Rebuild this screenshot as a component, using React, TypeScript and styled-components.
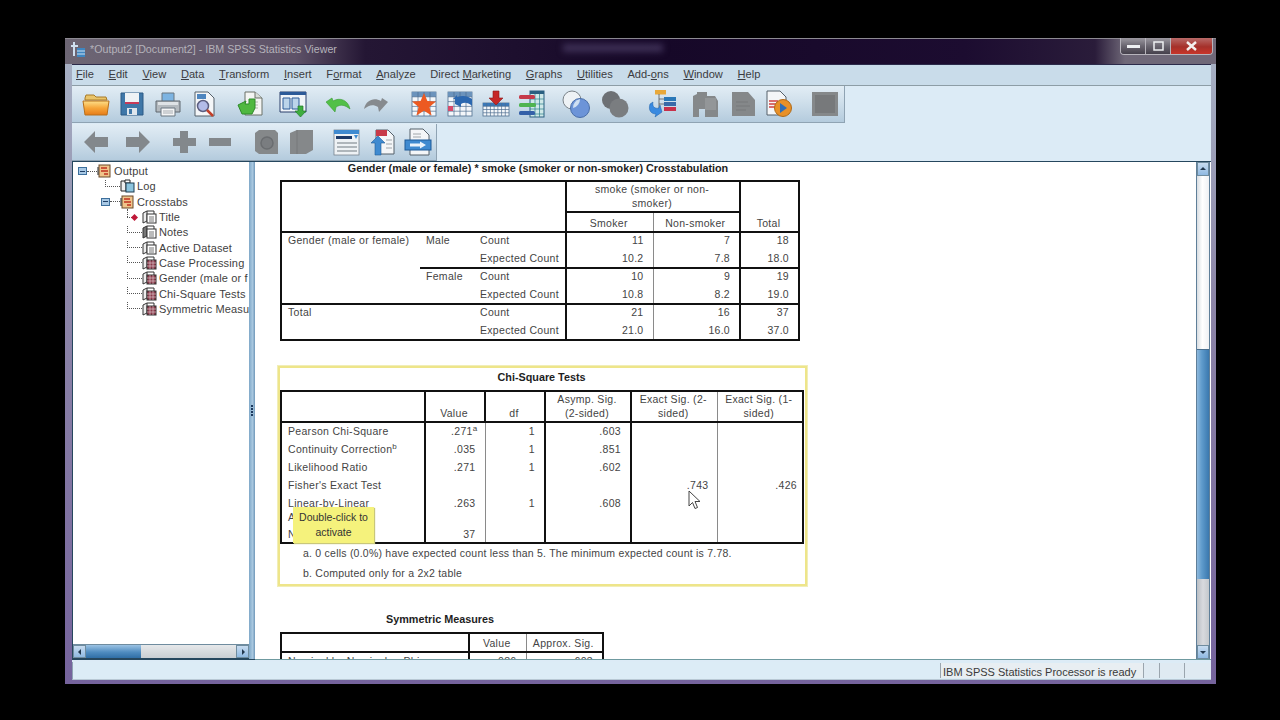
import React from "react";
import styled, { createGlobalStyle } from "styled-components";

const GlobalStyle = createGlobalStyle`
  html, body {
    margin: 0;
    padding: 0;
    background: #000;
  }
  * {
    box-sizing: border-box;
  }
`;

const Screen = styled.div`
  width: 1280px;
  height: 720px;
  overflow: hidden;
  padding: 38px 64px 36px 65px;
  background: #000;
  font-family: "Liberation Sans", Arial, sans-serif;
`;

const Window = styled.div`
  width: 1151px;
  height: 646px;
  display: flex;
  flex-direction: column;
  padding-bottom: 4px;
  background: linear-gradient(180deg, #a9b4c6 0%, #8d86a8 40%, #75639c 100%);
`;

const TitleBar = styled.div`
  height: 26px;
  flex: none;
  display: flex;
  align-items: flex-start;
  padding-left: 5px;
  border-top: 1px solid #8d8a92;
  background: linear-gradient(90deg, #6d6674 0, #5e5268 230px, #241634 300px, #160828 600px, #1c0c30 900px, #2a1c3a 1030px, #6f6878 1060px);
`;

const AppIcon = styled.svg`
  width: 16px;
  height: 17px;
  margin-top: 2px;
  flex: none;
`;

const TitleText = styled.div`
  margin: 3px 0 0 4px;
  color: #b4b2ba;
  font-size: 10.7px;
  line-height: 14px;
  white-space: nowrap;
`;

const GhostTitle = styled.div`
  width: 100px;
  height: 8px;
  margin: 5px 0 0 226px;
  background: #3d2f55;
  filter: blur(3px);
`;

const WindowButtons = styled.div`
  display: flex;
  height: 17px;
  margin: -1px 3px 0 auto;
  border: 1px solid #b7b4bc;
  border-top: none;
  border-radius: 0 0 4px 4px;
  overflow: hidden;
`;

const CaptionButton = styled.div<{ $w: number; $close?: boolean }>`
  width: ${(p) => p.$w}px;
  display: flex;
  align-items: center;
  justify-content: center;
  border-right: 1px solid #b7b4bc;
  background: ${(p) =>
    p.$close
      ? "linear-gradient(180deg, #b86a68 0%, #a5302a 55%, #c8352a 100%)"
      : "linear-gradient(180deg, #9b98a0 0%, #6a6670 50%, #45404c 100%)"};
  &:last-child {
    border-right: none;
  }
`;

const Body = styled.div`
  flex: 1;
  min-height: 0;
  display: flex;
  flex-direction: column;
  margin: 0 5px 0 7px;
  background: #dcebf6;
`;

const MenuBar = styled.div`
  height: 22px;
  flex: none;
  display: flex;
  align-items: center;
  gap: 14.7px;
  padding: 0 0 2px 4px;
  background: #c9dcea;
  border-top: 1px solid #2b2a4a;
  border-bottom: 1px solid #8d9da6;
  color: #3b3b40;
  font-size: 11.1px;
`;

const MenuItem = styled.span`
  white-space: nowrap;
`;

const ToolbarArea = styled.div`
  height: 76px;
  flex: none;
  display: flex;
  flex-direction: column;
  align-items: flex-start;
  gap: 1px;
  border-bottom: 1px solid #26475e;
`;

const Toolbar = styled.div<{ $w: number; $h: number }>`
  width: ${(p) => p.$w}px;
  height: ${(p) => p.$h}px;
  display: flex;
  align-items: center;
  background: linear-gradient(180deg, #e2edf5 0%, #cfdfeb 45%, #b4cbdd 100%);
  border-right: 1px solid #8fa3b3;
  border-bottom: 1px solid #8fa3b3;
`;

const ToolSlot = styled.div<{ $gap: number }>`
  width: 28px;
  height: 28px;
  flex: none;
  margin-left: ${(p) => p.$gap}px;
  svg {
    display: block;
    width: 28px;
    height: 28px;
  }
`;

const Main = styled.div`
  height: 498px;
  flex: none;
  display: flex;
`;

const TreePane = styled.div`
  width: 177px;
  flex: none;
  display: flex;
  flex-direction: column;
  background: #fff;
  border-left: 1px solid #26475e;
  border-bottom: 1px solid #26475e;
`;

const TreeList = styled.div`
  flex: 1;
  padding-top: 1.5px;
  overflow: hidden;
`;

const TreeRow = styled.div<{ $pad: number }>`
  position: relative;
  height: 15.3px;
  display: flex;
  align-items: center;
  padding-left: ${(p) => p.$pad}px;
  color: #3f3f3f;
  font-size: 11px;
  letter-spacing: 0.15px;
  white-space: nowrap;
  overflow: hidden;
`;

const Toggle = styled.span`
  width: 9px;
  height: 8px;
  flex: none;
  display: flex;
  align-items: center;
  justify-content: center;
  background: #a8c8e4;
  border: 1px solid #3d6f9c;
  &::after {
    content: "";
    width: 5px;
    height: 1px;
    background: #1f3f66;
  }
`;

const Branch = styled.span<{ $w: number; $x: number; $up: number }>`
  width: ${(p) => p.$w}px;
  flex: none;
  border-bottom: 1px dotted #555;
  &::before {
    content: "";
    position: absolute;
    left: ${(p) => p.$x}px;
    top: ${(p) => -p.$up}px;
    height: ${(p) => p.$up + 8}px;
    border-left: 1px dotted #555;
  }
`;

const Marker = styled.span`
  width: 5px;
  height: 5px;
  flex: none;
  margin-right: 5px;
  background: #c01838;
  transform: rotate(45deg);
`;

const TreeIconBox = styled.svg`
  width: 15px;
  height: 14px;
  flex: none;
  margin-right: 2px;
`;

const HScroll = styled.div`
  height: 15px;
  flex: none;
  display: flex;
  border-top: 1px solid #6f8c9f;
  border-bottom: 1px solid #26475e;
  background: linear-gradient(180deg, #e6e8ea 0%, #c9ced3 100%);
`;

const HThumb = styled.div`
  width: 55px;
  margin-left: 0;
  background: linear-gradient(180deg, #9cc3e4 0%, #4f8cc0 55%, #2f6ea6 100%);
`;

const ScrollButton = styled.div<{ $dir: "up" | "down" | "left" | "right" }>`
  flex: none;
  width: ${(p) => (p.$dir === "left" || p.$dir === "right" ? "13px" : "100%")};
  height: ${(p) => (p.$dir === "left" || p.$dir === "right" ? "100%" : "14px")};
  display: flex;
  align-items: center;
  justify-content: center;
  background: linear-gradient(180deg, #c8dcf0 0%, #8fb9e2 100%);
  border: 1px solid #6f8c9f;
  margin-left: ${(p) => (p.$dir === "right" ? "auto" : "0")};
  &::after {
    content: "";
    width: 0;
    height: 0;
    border: 3.5px solid transparent;
    ${(p) => (p.$dir === "up" ? "border-bottom-color: #22384e; margin-top: -4px;" : "")}
    ${(p) => (p.$dir === "down" ? "border-top-color: #22384e; margin-top: 4px;" : "")}
    ${(p) => (p.$dir === "left" ? "border-right-color: #22384e; margin-left: -4px;" : "")}
    ${(p) => (p.$dir === "right" ? "border-left-color: #22384e; margin-left: 4px;" : "")}
  }
`;

const Splitter = styled.div`
  width: 6px;
  flex: none;
  display: flex;
  align-items: center;
  justify-content: center;
  background: linear-gradient(90deg, #7fa8c8 0%, #a9c8e0 60%, #6f97b8 100%);
  border-bottom: 1px solid #26475e;
`;

const SplitDots = styled.div`
  width: 2px;
  height: 12px;
  margin-bottom: 0;
  background: repeating-linear-gradient(180deg, #1d3a5e 0 2px, transparent 2px 3px);
`;

const Viewer = styled.div`
  flex: 1;
  min-width: 0;
  display: flex;
  background: #fff;
  border-bottom: 1px solid #6f9aa0;
`;

const ViewerBody = styled.div`
  flex: 1;
  min-width: 0;
  height: 497px;
  overflow: hidden;
  padding-left: 23px;
`;

const Scrollbar = styled.div`
  width: 14px;
  flex: none;
  margin: 0 1px 0 0;
  display: flex;
  flex-direction: column;
  border-left: 1px solid #5f7f99;
  border-right: 1px solid #5f7f99;
  background: #fff;
`;

const ScrollTrack = styled.div`
  height: 173px;
  flex: none;
  background: linear-gradient(90deg, #d8dde2 0%, #fff 45%, #eef0f3 100%);
`;

const ScrollThumb = styled.div`
  height: 230px;
  flex: none;
  background: linear-gradient(90deg, #8db8dc 0%, #5f9bcc 40%, #3a78ae 100%);
  border-top: 1px solid #4a6f8f;
`;

const ScrollRest = styled.div`
  flex: 1;
  background: linear-gradient(90deg, #b9bec4 0%, #d8dade 50%, #c4c8cc 100%);
`;

const Title = styled.div<{ $w: number; $top: number; $shift?: number }>`
  width: ${(p) => p.$w}px;
  margin-top: ${(p) => p.$top}px;
  margin-left: ${(p) => p.$shift ?? 1}px;
  color: #1e1e1e;
  font-size: 10.8px;
  font-weight: bold;
  line-height: 12px;
  text-align: center;
  white-space: nowrap;
`;

const Table = styled.table<{ $w: number; $top: number; $left?: number }>`
  width: ${(p) => p.$w}px;
  margin-top: ${(p) => p.$top}px;
  margin-left: ${(p) => p.$left ?? 2}px;
  table-layout: fixed;
  border-collapse: collapse;
  border: 2px solid #111;
  color: #444;
  font-size: 10.5px;
  line-height: 14px;
  letter-spacing: 0.3px;
`;

type Line = "strong" | "soft" | "none";
const lineCss = (l?: Line) =>
  l === "strong" ? "2px solid #111" : l === "soft" ? "1px solid #8a8a8a" : "none";

const Cell = styled.td<{
  $num?: boolean;
  $head?: boolean;
  $right?: Line;
  $bottom?: Line;
  $h?: number;
  $pr?: number;
  $pt?: number;
}>`
  height: ${(p) => p.$h ?? 18}px;
  padding: ${(p) =>
    p.$head
      ? "0 5px 1px 3px"
      : `${p.$pt ?? 0}px ${p.$num ? p.$pr ?? 9 : 2}px 0 ${p.$num ? 2 : 6}px`};
  vertical-align: ${(p) => (p.$head ? "bottom" : "top")};
  text-align: ${(p) => (p.$head ? "center" : p.$num ? "right" : "left")};
  border-right: ${(p) => lineCss(p.$right)};
  border-bottom: ${(p) => lineCss(p.$bottom)};
  white-space: ${(p) => (p.$head ? "normal" : "nowrap")};
  overflow: visible;
`;

const Sup = styled.sup`
  font-size: 8px;
  line-height: 0;
  margin-right: -3px;
`;

const SelectedFrame = styled.div`
  position: relative;
  width: 529px;
  height: 220px;
  margin-top: 25px;
  outline: 1px solid #f1eeb8;
  border: 2px solid #eee58a;
`;

const FrameTitle = styled(Title)`
  margin-left: 1px;
`;

const Footnotes = styled.div`
  margin: -1px 0 0 23px;
  color: #444;
  font-size: 10.5px;
  line-height: 20px;
  letter-spacing: 0.23px;
  white-space: nowrap;
`;

const Tooltip = styled.div`
  position: absolute;
  left: 13px;
  top: 139px;
  width: 81px;
  height: 36px;
  padding-top: 3px;
  background: #f5f27c;
  box-shadow: 1px 1px 1px #c9c77a;
  color: #333;
  font-size: 10.5px;
  line-height: 15px;
  text-align: center;
`;

const Pointer = styled.svg`
  position: absolute;
  left: 408px;
  top: 122px;
  width: 13px;
  height: 20px;
`;

const StatusBar = styled.div`
  height: 18px;
  flex: none;
  margin-top: 2px;
  display: flex;
  align-items: stretch;
  padding-left: 1px;
  background: #dcecf6;
  border-bottom: 1px solid #b8c8d4;
  border-left: 1px solid #8fa3b3;
  color: #3a3a3a;
  font-size: 11px;
`;

const StatusCell = styled.div<{ $w: number; $first?: boolean }>`
  width: ${(p) => p.$w}px;
  flex: none;
  margin: 1px 0;
  margin-left: ${(p) => (p.$first ? "auto" : "0")};
  padding-left: 2px;
  line-height: 18px;
  border-left: 1px solid #9aa5ae;
  background: ${(p) => (p.$first ? "#e8eef2" : "#dfeaf2")};
  white-space: nowrap;
`;

/* ---------- drawn icons ---------- */

const Tool = ({ children }: { children: React.ReactNode }) => (
  <svg viewBox="0 0 28 28">{children}</svg>
);

const Doc = ({ x = 7, y = 2, w = 17, h = 23 }: { x?: number; y?: number; w?: number; h?: number }) => (
  <path
    d={`M${x} ${y}h${w - 6}l6 6v${h - 6}h-${w}z`}
    fill="#f4f6f8"
    stroke="#55606a"
    strokeWidth="1"
  />
);

const OpenIcon = () => (
  <Tool>
    <defs>
      <linearGradient id="fo" x1="0" y1="0" x2="0" y2="1">
        <stop offset="0" stopColor="#fde08a" />
        <stop offset="0.5" stopColor="#f6a63a" />
        <stop offset="1" stopColor="#e67b18" />
      </linearGradient>
    </defs>
    <path d="M3 8l1-3h8l2 2h10l1 3H3z" fill="#e9c46a" stroke="#a87a28" />
    <path d="M1 11h26l-2 14H3z" fill="url(#fo)" stroke="#b8701c" />
  </Tool>
);
const SaveIcon = () => (
  <Tool>
    <path d="M3 3h22v22H3z" fill="#3f77a8" stroke="#2c5a85" />
    <path d="M7 3h14v9H7z" fill="#eef2f5" />
    <path d="M7 12h14v2H7z" fill="#c83a58" />
    <path d="M9 18h10v7H9z" fill="#dfe6ec" />
    <path d="M11 19h3v5h-3z" fill="#3f77a8" />
  </Tool>
);
const PrintIcon = () => (
  <Tool>
    <path d="M8 3h12v9H8z" fill="#7db4e2" stroke="#6a7680" />
    <path d="M2 11h24v11H2z" fill="#b4babf" stroke="#5f676e" />
    <path d="M4 12h20v3H4z" fill="#dfe3e6" />
    <path d="M7 18h14v8H7z" fill="#f4f5f6" stroke="#6a7680" />
    <path d="M9 21h10M9 23h10" stroke="#a8adb2" />
  </Tool>
);
const PreviewIcon = () => (
  <Tool>
    <Doc x={5} y={2} w={19} h={24} />
    <path d="M7 4h9v5H7z" fill="#4f86bf" />
    <circle cx="13" cy="16" r="5.5" fill="#b3bce8" stroke="#5c5f80" strokeWidth="1.5" />
    <path d="M17 20l6 6" stroke="#c2402a" strokeWidth="2.5" />
  </Tool>
);
const ExportIcon = () => (
  <Tool>
    <path d="M9 2h10l7 6v17H9z" fill="#f4f5f3" stroke="#6a7068" />
    <path d="M19 2v6h7" fill="#d8dcd8" stroke="#6a7068" />
    <path d="M18 12h4M18 15h4M18 18h4" stroke="#b0b4ae" />
    <path d="M2 15l4 9h10l3-6v-9h-6v5H9l1-3z" fill="#4fb840" stroke="#2e8a2a" />
  </Tool>
);
const SelectIcon = () => (
  <Tool>
    <path d="M1 2h26v20H1z" fill="#f0f4f8" stroke="#2a3f6a" />
    <path d="M1 2h26v3H1z" fill="#2c5a98" />
    <path d="M4 8h7v11H4zM13 8h7v11h-7z" fill="#bcd4ea" stroke="#2c5a98" />
    <path d="M19 16h5v5h3l-5.5 6-5.5-6h3z" fill="#3fae3f" stroke="#1f7a2a" strokeWidth="0.7" />
  </Tool>
);
const UndoIcon = () => (
  <Tool>
    <path d="M2 12l9 10 1-5c5-3 9-2 14 2-2-9-10-12-17-8l-1-3z" fill="#52c048" stroke="#3a9a34" strokeWidth="0.6" />
  </Tool>
);
const RedoIcon = () => (
  <Tool>
    <path d="M26 12l-9 10-1-5c-5-3-9-2-14 2 2-9 10-12 17-8l1-3z" fill="#868a8e" />
  </Tool>
);
const Grid = ({ x, y, w, h, nx, ny, head = "#6b93bc" }: { x: number; y: number; w: number; h: number; nx: number; ny: number; head?: string }) => {
  const lines: string[] = [];
  for (let i = 1; i < nx; i++) lines.push(`M${x + (i * w) / nx} ${y}v${h}`);
  for (let j = 1; j < ny; j++) lines.push(`M${x} ${y + (j * h) / ny}h${w}`);
  return (
    <g>
      <rect x={x} y={y} width={w} height={h} fill="#f4f7fa" stroke="#4f6f90" strokeWidth="0.8" />
      <rect x={x} y={y} width={w} height={h / ny} fill={head} />
      <path d={lines.join("")} stroke="#4f6f90" strokeWidth="0.7" fill="none" />
    </g>
  );
};
const StarIcon = () => (
  <Tool>
    <Grid x={2} y={2} w={24} h={24} nx={4} ny={5} />
    <path d="M14 3l3.4 8 8.6.6-6.6 5.4 2.2 8.4L14 20.8l-7.6 4.6 2.2-8.4L2 11.6l8.6-.6z" fill="#ec5a22" />
  </Tool>
);
const SwapIcon = () => (
  <Tool>
    <Grid x={2} y={2} w={24} h={24} nx={4} ny={5} />
    <path d="M2 16h5v5H2z" fill="#d64a6a" />
    <path d="M9 14V9l-2 0 4-4 0 2c6-2 11-1 15 2v7c-4-4-8-4-11-2v3z" fill="#2c68b0" />
  </Tool>
);
const DownTableIcon = () => (
  <Tool>
    <Grid x={1} y={13} w={26} h={13} nx={7} ny={4} head="#3a78b8" />
    <path d="M11 1h6v7h4l-7 7-7-7h4z" fill="#c62828" stroke="#8a1a1a" strokeWidth="0.6" />
  </Tool>
);
const BarsTableIcon = () => (
  <Tool>
    <rect x="12" y="1" width="14" height="26" fill="#cfe8e8" stroke="#2a5f80" />
    <path d="M12 1h14v3H12z" fill="#2a5f80" />
    <path d="M17 4v23M21.5 4v23M12 9h14M12 14h14M12 19h14M12 24h14" stroke="#2a7f8a" strokeWidth="0.7" />
    <rect x="1" y="5" width="16" height="4" rx="1.5" fill="#c63a4a" />
    <rect x="1" y="13" width="17" height="4" rx="1.5" fill="#4fb44f" />
    <rect x="1" y="21" width="16" height="4" rx="1.5" fill="#3460a8" />
  </Tool>
);
const VennIcon = () => (
  <Tool>
    <circle cx="10" cy="10" r="9" fill="#eef2f5" stroke="#7a8288" />
    <circle cx="18" cy="18" r="9.5" fill="#6c94d8" stroke="#4a6fa8" />
    <path d="M11 18a9.5 9.5 0 0 1 7-9 9 9 0 0 1-7 9z" fill="#cfe0f2" />
  </Tool>
);
const VennGreyIcon = () => (
  <Tool>
    <circle cx="10" cy="10" r="9" fill="#6d7074" />
    <circle cx="18" cy="18" r="9.5" fill="#7a7d80" />
  </Tool>
);
const TreeBoxesIcon = () => (
  <Tool>
    <rect x="7" y="0" width="11" height="4.5" fill="#e8a83a" />
    <path d="M11 4v15M11 9h6M11 14h6" stroke="#555" strokeWidth="0.8" />
    <rect x="16" y="7" width="12" height="4" fill="#2a78b8" />
    <rect x="16" y="12" width="12" height="4" fill="#3a6aa8" />
    <rect x="16" y="17" width="12" height="4" fill="#c8304a" />
    <path d="M2 14c-2 6 1 10 6 10l-1 3 7-5-2-7-1 3c-4 1-7-1-6-6z" fill="#3a8ae0" stroke="#1f60a8" strokeWidth="0.5" />
  </Tool>
);
const BookGreyIcon = () => (
  <Tool>
    <path d="M2 6l4-2v-2h10v4h8l3 5v16H14v-8h-6v8H2z" fill="#85888a" />
    <path d="M14 8h11v12H14z" fill="#939698" />
  </Tool>
);
const DocGreyIcon = () => (
  <Tool>
    <path d="M3 2h16l7 8v16H3z" fill="#85888a" />
    <path d="M7 12h12M7 16h14M7 20h10" stroke="#77797b" />
  </Tool>
);
const PlayDocIcon = () => (
  <Tool>
    <Doc x={2} y={1} w={19} h={24} />
    <path d="M4 11h9M4 14h7M4 17h9" stroke="#d04040" strokeWidth="1.5" />
    <circle cx="18" cy="18" r="8.5" fill="#e89028" stroke="#b06a18" />
    <path d="M15 13l7 5-7 5z" fill="#2f6eb8" />
  </Tool>
);
const SquareGreyIcon = () => (
  <Tool>
    <rect x="1" y="2" width="26" height="24" fill="#85888a" />
    <rect x="4" y="5" width="20" height="18" fill="#77797b" />
  </Tool>
);
const BackIcon = () => (
  <Tool>
    <path d="M1 14l11-11v6h13v10H12v6z" fill="#83888c" />
  </Tool>
);
const ForwardIcon = () => (
  <Tool>
    <path d="M27 14L16 3v6H3v10h13v6z" fill="#83888c" />
  </Tool>
);
const PlusIcon = () => (
  <Tool>
    <path d="M10 3h8v7h8v8h-8v7h-8v-7H3v-8h7z" fill="#83888c" />
  </Tool>
);
const MinusIcon = () => (
  <Tool>
    <path d="M3 10h22v8H3z" fill="#83888c" />
  </Tool>
);
const BookAIcon = () => (
  <Tool>
    <path d="M3 5l4-3h16l3 3v21H7l-4-3z" fill="#85888a" />
    <circle cx="15" cy="15" r="6" fill="#7a7d80" stroke="#6a6d70" strokeWidth="1.5" />
  </Tool>
);
const BookBIcon = () => (
  <Tool>
    <path d="M2 5l7-3h16v20l-7 4H2z" fill="#85888a" />
    <path d="M9 2v24" stroke="#77797b" />
  </Tool>
);
const ListIcon = () => (
  <Tool>
    <rect x="2" y="2" width="25" height="25" fill="#eef2f5" stroke="#6a7680" strokeWidth="0.7" />
    <rect x="2" y="2" width="25" height="4" fill="#3f8ad0" />
    <rect x="4" y="8" width="16" height="3" fill="#1c3a6a" />
    <path d="M22 7l4 0-2 4z" fill="#3f8ad0" />
    <path d="M5 15h20M5 19h20M5 23h20" stroke="#9aa2a8" strokeWidth="1.4" />
  </Tool>
);
const DocUpIcon = () => (
  <Tool>
    <Doc x={8} y={2} w={18} h={24} />
    <path d="M8 2h11v6H8z" fill="#c83a48" />
    <path d="M18 12h6M18 16h6M18 20h6" stroke="#a0a6aa" />
    <path d="M10 8l7 7h-4v12H7V15H3z" fill="#3f8ad0" stroke="#1f5a98" strokeWidth="0.6" />
  </Tool>
);
const DocArrowIcon = () => (
  <Tool>
    <Doc x={6} y={1} w={19} h={26} />
    <path d="M9 6h8M9 9h8" stroke="#a0a6aa" />
    <rect x="1" y="12" width="26" height="10" fill="#3f8ad0" stroke="#1f5a98" />
    <path d="M6 15.5h10v-2l6 3.5-6 3.5v-2H6z" fill="#eaf3fb" />
  </Tool>
);

const toolbarOne: { icon: React.ReactNode; gap: number }[] = [
  { icon: <OpenIcon />, gap: 10 },
  { icon: <SaveIcon />, gap: 8 },
  { icon: <PrintIcon />, gap: 8 },
  { icon: <PreviewIcon />, gap: 8 },
  { icon: <ExportIcon />, gap: 18 },
  { icon: <SelectIcon />, gap: 15 },
  { icon: <UndoIcon />, gap: 17 },
  { icon: <RedoIcon />, gap: 10 },
  { icon: <StarIcon />, gap: 20 },
  { icon: <SwapIcon />, gap: 8 },
  { icon: <DownTableIcon />, gap: 8 },
  { icon: <BarsTableIcon />, gap: 8 },
  { icon: <VennIcon />, gap: 16 },
  { icon: <VennGreyIcon />, gap: 11 },
  { icon: <TreeBoxesIcon />, gap: 19 },
  { icon: <BookGreyIcon />, gap: 15 },
  { icon: <DocGreyIcon />, gap: 10 },
  { icon: <PlayDocIcon />, gap: 8 },
  { icon: <SquareGreyIcon />, gap: 18 },
];

const toolbarTwo: { icon: React.ReactNode; gap: number }[] = [
  { icon: <BackIcon />, gap: 11 },
  { icon: <ForwardIcon />, gap: 12 },
  { icon: <PlusIcon />, gap: 19 },
  { icon: <MinusIcon />, gap: 8 },
  { icon: <BookAIcon />, gap: 18 },
  { icon: <BookBIcon />, gap: 8 },
  { icon: <ListIcon />, gap: 16 },
  { icon: <DocUpIcon />, gap: 8 },
  { icon: <DocArrowIcon />, gap: 8 },
];

type TreeKind = "output" | "log" | "title" | "notes" | "doc" | "table";

const TreeIcon = ({ kind }: { kind: TreeKind }) => (
  <TreeIconBox viewBox="0 0 15 14">
    {kind === "output" && (
      <>
        <rect x="2" y="1" width="11" height="12" fill="#f0c48a" stroke="#6a4a2a" />
        <path d="M4 4h6M4 7h7M7 10h4" stroke="#c03020" strokeWidth="1.4" />
        <path d="M1 3v8" stroke="#222" />
      </>
    )}
    {kind === "log" && (
      <>
        <path d="M1 2h5v10H1z" fill="#eee" stroke="#222" />
        <path d="M5 1h5v3H5z" fill="#fff" stroke="#222" />
        <rect x="6" y="4" width="8" height="9" fill="#8cc4de" stroke="#1e3c50" />
      </>
    )}
    {kind !== "output" && kind !== "log" && (
      <>
        <path d="M1 3l4-2v10l-4 2z" fill={kind === "notes" ? "#777" : "#eee"} stroke="#333" />
        <path d="M5 1h7v3" fill="none" stroke="#333" />
        <rect x="5" y="4" width="9" height="9" fill={kind === "table" ? "#8a3a4a" : "#fff"} stroke="#333" />
        {kind === "table" ? (
          <path d="M5 7h9M5 10h9M8 4v9M11 4v9" stroke="#e8d8da" strokeWidth="0.6" />
        ) : (
          <path d="M7 7h5M7 9h5M7 11h5" stroke="#777" />
        )}
      </>
    )}
  </TreeIconBox>
);

const menus: [string, string, string][] = [
  ["", "F", "ile"],
  ["", "E", "dit"],
  ["", "V", "iew"],
  ["", "D", "ata"],
  ["", "T", "ransform"],
  ["", "I", "nsert"],
  ["F", "o", "rmat"],
  ["", "A", "nalyze"],
  ["Direct ", "M", "arketing"],
  ["", "G", "raphs"],
  ["", "U", "tilities"],
  ["Add-", "o", "ns"],
  ["", "W", "indow"],
  ["", "H", "elp"],
];

const leaves: { label: string; kind: TreeKind; up: number; mark?: boolean }[] = [
  { label: "Title", kind: "title", up: 0, mark: true },
  { label: "Notes", kind: "notes", up: 8 },
  { label: "Active Dataset", kind: "doc", up: 8 },
  { label: "Case Processing", kind: "table", up: 8 },
  { label: "Gender (male or f", kind: "table", up: 8 },
  { label: "Chi-Square Tests", kind: "table", up: 8 },
  { label: "Symmetric Measu", kind: "table", up: 8 },
];

export default function App() {
  return (
    <>
      <GlobalStyle />
      <Screen>
        <Window>
          <TitleBar>
            <AppIcon viewBox="0 0 16 17">
              <path d="M4 1v14M1 5h7" stroke="#cfe0f0" strokeWidth="2" />
              <rect x="7" y="7" width="8" height="9" fill="#3f86c0" />
              <path d="M7 10h8M7 13h8" stroke="#cfe0f0" />
            </AppIcon>
            <TitleText>*Output2 [Document2] - IBM SPSS Statistics Viewer</TitleText>
            <GhostTitle />
            <WindowButtons>
              <CaptionButton $w={25}>
                <svg width="13" height="5" viewBox="0 0 13 5">
                  <rect x="0" y="1" width="13" height="3" fill="#eef0f2" />
                </svg>
              </CaptionButton>
              <CaptionButton $w={25}>
                <svg width="11" height="10" viewBox="0 0 11 10">
                  <rect x="1" y="1" width="9" height="8" fill="none" stroke="#eef0f2" strokeWidth="1.5" />
                </svg>
              </CaptionButton>
              <CaptionButton $w={41} $close>
                <svg width="11" height="10" viewBox="0 0 11 10">
                  <path d="M1 1l9 8M10 1l-9 8" stroke="#f4f0ee" strokeWidth="2.4" />
                </svg>
              </CaptionButton>
            </WindowButtons>
          </TitleBar>
          <Body>
            <MenuBar>
              {menus.map(([before, key, after]) => (
                <MenuItem key={before + key + after}>
                  {before}
                  <u>{key}</u>
                  {after}
                </MenuItem>
              ))}
            </MenuBar>
            <ToolbarArea>
              <Toolbar $w={773} $h={37}>
                {toolbarOne.map((t, i) => (
                  <ToolSlot key={i} $gap={t.gap}>
                    {t.icon}
                  </ToolSlot>
                ))}
              </Toolbar>
              <Toolbar $w={365} $h={37}>
                {toolbarTwo.map((t, i) => (
                  <ToolSlot key={i} $gap={t.gap}>
                    {t.icon}
                  </ToolSlot>
                ))}
              </Toolbar>
            </ToolbarArea>
            <Main>
              <TreePane>
                <TreeList>
                  <TreeRow $pad={5}>
                    <Toggle />
                    <Branch $w={10} $x={32} $up={-8} />
                    <TreeIcon kind="output" />
                    Output
                  </TreeRow>
                  <TreeRow $pad={32}>
                    <Branch $w={15} $x={32} $up={8} />
                    <TreeIcon kind="log" />
                    Log
                  </TreeRow>
                  <TreeRow $pad={28}>
                    <Toggle />
                    <Branch $w={10} $x={54} $up={-8} />
                    <TreeIcon kind="output" />
                    Crosstabs
                  </TreeRow>
                  {leaves.map((leaf) => (
                    <TreeRow key={leaf.label} $pad={54}>
                      <Branch $w={leaf.mark ? 5 : 15} $x={54} $up={leaf.up} />
                      {leaf.mark && <Marker />}
                      <TreeIcon kind={leaf.kind} />
                      {leaf.label}
                    </TreeRow>
                  ))}
                </TreeList>
                <HScroll>
                  <ScrollButton $dir="left" />
                  <HThumb />
                  <ScrollButton $dir="right" />
                </HScroll>
              </TreePane>
              <Splitter>
                <SplitDots />
              </Splitter>
              <Viewer>
                <ViewerBody>
                  <Title $w={518} $top={0}>
                    Gender (male or female) * smoke (smoker or non-smoker) Crosstabulation
                  </Title>
                  <Table $w={518} $top={6}>
                    <colgroup>
                      <col style={{ width: 139 }} />
                      <col style={{ width: 54 }} />
                      <col style={{ width: 92 }} />
                      <col style={{ width: 87 }} />
                      <col style={{ width: 87 }} />
                      <col style={{ width: 59 }} />
                    </colgroup>
                    <tbody>
                      <tr>
                        <Cell $head colSpan={3} rowSpan={2} $right="strong" $bottom="strong" />
                        <Cell $head colSpan={2} $right="strong" $bottom="strong" $h={31}>
                          smoke (smoker or non-
                          <br />
                          smoker)
                        </Cell>
                        <Cell $head rowSpan={2} $bottom="strong">
                          Total
                        </Cell>
                      </tr>
                      <tr>
                        <Cell $head $right="soft" $bottom="strong" $h={20}>
                          Smoker
                        </Cell>
                        <Cell $head $right="strong" $bottom="strong" $h={20}>
                          Non-smoker
                        </Cell>
                      </tr>
                      <tr>
                        <Cell rowSpan={4} $bottom="strong">
                          Gender (male or female)
                        </Cell>
                        <Cell rowSpan={2} $bottom="strong">
                          Male
                        </Cell>
                        <Cell $right="strong">Count</Cell>
                        <Cell $num $right="soft">11</Cell>
                        <Cell $num $right="strong">7</Cell>
                        <Cell $num>18</Cell>
                      </tr>
                      <tr>
                        <Cell $pt={1} $right="strong" $bottom="strong">Expected Count</Cell>
                        <Cell $pt={1} $num $right="soft" $bottom="strong">10.2</Cell>
                        <Cell $pt={1} $num $right="strong" $bottom="strong">7.8</Cell>
                        <Cell $pt={1} $num $bottom="strong">18.0</Cell>
                      </tr>
                      <tr>
                        <Cell rowSpan={2} $bottom="strong">
                          Female
                        </Cell>
                        <Cell $right="strong">Count</Cell>
                        <Cell $num $right="soft">10</Cell>
                        <Cell $num $right="strong">9</Cell>
                        <Cell $num>19</Cell>
                      </tr>
                      <tr>
                        <Cell $pt={1} $right="strong" $bottom="strong">Expected Count</Cell>
                        <Cell $pt={1} $num $right="soft" $bottom="strong">10.8</Cell>
                        <Cell $pt={1} $num $right="strong" $bottom="strong">8.2</Cell>
                        <Cell $pt={1} $num $bottom="strong">19.0</Cell>
                      </tr>
                      <tr>
                        <Cell colSpan={2} rowSpan={2}>
                          Total
                        </Cell>
                        <Cell $right="strong">Count</Cell>
                        <Cell $num $right="soft">21</Cell>
                        <Cell $num $right="strong">16</Cell>
                        <Cell $num>37</Cell>
                      </tr>
                      <tr>
                        <Cell $pt={1} $right="strong">Expected Count</Cell>
                        <Cell $pt={1} $num $right="soft">21.0</Cell>
                        <Cell $pt={1} $num $right="strong">16.0</Cell>
                        <Cell $pt={1} $num>37.0</Cell>
                      </tr>
                    </tbody>
                  </Table>

                  <SelectedFrame>
                    <FrameTitle $w={521} $top={3}>
                      Chi-Square Tests
                    </FrameTitle>
                    <Table $w={522} $top={7} $left={0}>
                      <colgroup>
                        <col style={{ width: 144 }} />
                        <col style={{ width: 60 }} />
                        <col style={{ width: 60 }} />
                        <col style={{ width: 86 }} />
                        <col style={{ width: 86 }} />
                        <col style={{ width: 86 }} />
                      </colgroup>
                      <tbody>
                        <tr>
                          <Cell $head $right="strong" $bottom="strong" $h={31} />
                          <Cell $head $right="strong" $bottom="strong">Value</Cell>
                          <Cell $head $right="strong" $bottom="strong">df</Cell>
                          <Cell $head $right="strong" $bottom="strong">Asymp. Sig. (2-sided)</Cell>
                          <Cell $head $right="soft" $bottom="strong">Exact Sig. (2-sided)</Cell>
                          <Cell $head $bottom="strong">Exact Sig. (1-sided)</Cell>
                        </tr>
                        <tr>
                          <Cell $pt={1} $right="strong">Pearson Chi-Square</Cell>
                          <Cell $pt={1} $num $right="soft" $pr={10}>.271<Sup>a</Sup></Cell>
                          <Cell $pt={1} $num $right="strong">1</Cell>
                          <Cell $pt={1} $num $right="strong">.603</Cell>
                          <Cell $pt={1} $num $right="soft" />
                          <Cell $pt={1} $num />
                        </tr>
                        <tr>
                          <Cell $pt={2} $right="strong">Continuity Correction<Sup>b</Sup></Cell>
                          <Cell $pt={2} $num $right="soft">.035</Cell>
                          <Cell $pt={2} $num $right="strong">1</Cell>
                          <Cell $pt={2} $num $right="strong">.851</Cell>
                          <Cell $pt={2} $num $right="soft" />
                          <Cell $pt={2} $num />
                        </tr>
                        <tr>
                          <Cell $pt={2} $right="strong">Likelihood Ratio</Cell>
                          <Cell $pt={2} $num $right="soft">.271</Cell>
                          <Cell $pt={2} $num $right="strong">1</Cell>
                          <Cell $pt={2} $num $right="strong">.602</Cell>
                          <Cell $pt={2} $num $right="soft" />
                          <Cell $pt={2} $num />
                        </tr>
                        <tr>
                          <Cell $pt={2} $right="strong">Fisher's Exact Test</Cell>
                          <Cell $pt={2} $num $right="soft" />
                          <Cell $pt={2} $num $right="strong" />
                          <Cell $pt={2} $num $right="strong" />
                          <Cell $pt={2} $num $right="soft" $pr={8}>.743</Cell>
                          <Cell $pt={2} $num $pr={5}>.426</Cell>
                        </tr>
                        <tr>
                          <Cell $pt={2} $right="strong" $h={31}>
                            Linear-by-Linear
                            <br />
                            Association
                          </Cell>
                          <Cell $pt={2} $num $right="soft">.263</Cell>
                          <Cell $pt={2} $num $right="strong">1</Cell>
                          <Cell $pt={2} $num $right="strong">.608</Cell>
                          <Cell $pt={2} $num $right="soft" />
                          <Cell $pt={2} $num />
                        </tr>
                        <tr>
                          <Cell $pt={2} $right="strong" $h={18}>N of Valid Cases</Cell>
                          <Cell $pt={2} $num $right="soft" $h={18}>37</Cell>
                          <Cell $pt={2} $num $right="strong" $h={18} />
                          <Cell $pt={2} $num $right="strong" $h={18} />
                          <Cell $pt={2} $num $right="soft" $h={18} />
                          <Cell $pt={2} $num $h={18} />
                        </tr>
                      </tbody>
                    </Table>
                    <Footnotes>
                      a. 0 cells (0.0%) have expected count less than 5. The minimum expected count is 7.78.
                      <br />
                      b. Computed only for a 2x2 table
                    </Footnotes>
                    <Tooltip>
                      Double-click to
                      <br />
                      activate
                    </Tooltip>
                    <Pointer viewBox="0 0 13 20">
                      <path d="M1 1v15l3.5-3.5 2.5 6 2.5-1-2.5-6H12z" fill="#fff" stroke="#444" strokeWidth="1" />
                    </Pointer>
                  </SelectedFrame>

                  <Title $w={322} $top={27}>
                    Symmetric Measures
                  </Title>
                  <Table $w={322} $top={7}>
                    <colgroup>
                      <col style={{ width: 188 }} />
                      <col style={{ width: 57 }} />
                      <col style={{ width: 77 }} />
                    </colgroup>
                    <tbody>
                      <tr>
                        <Cell $head $right="strong" $bottom="strong" $h={19} />
                        <Cell $head $right="soft" $bottom="strong">Value</Cell>
                        <Cell $head $bottom="strong">Approx. Sig.</Cell>
                      </tr>
                      <tr>
                        <Cell $pt={1} $right="strong">Nominal by Nominal&nbsp;&nbsp;&nbsp;&nbsp;&nbsp;Phi</Cell>
                        <Cell $pt={1} $num $right="soft">.086</Cell>
                        <Cell $pt={1} $num>.603</Cell>
                      </tr>
                    </tbody>
                  </Table>
                </ViewerBody>
                <Scrollbar>
                  <ScrollButton $dir="up" />
                  <ScrollTrack />
                  <ScrollThumb />
                  <ScrollRest />
                  <ScrollButton $dir="down" />
                </Scrollbar>
              </Viewer>
            </Main>
            <StatusBar>
              <StatusCell $w={203} $first>
                IBM SPSS Statistics Processor is ready
              </StatusCell>
              <StatusCell $w={16} />
              <StatusCell $w={25} />
              <StatusCell $w={27} />
            </StatusBar>
          </Body>
        </Window>
      </Screen>
    </>
  );
}
